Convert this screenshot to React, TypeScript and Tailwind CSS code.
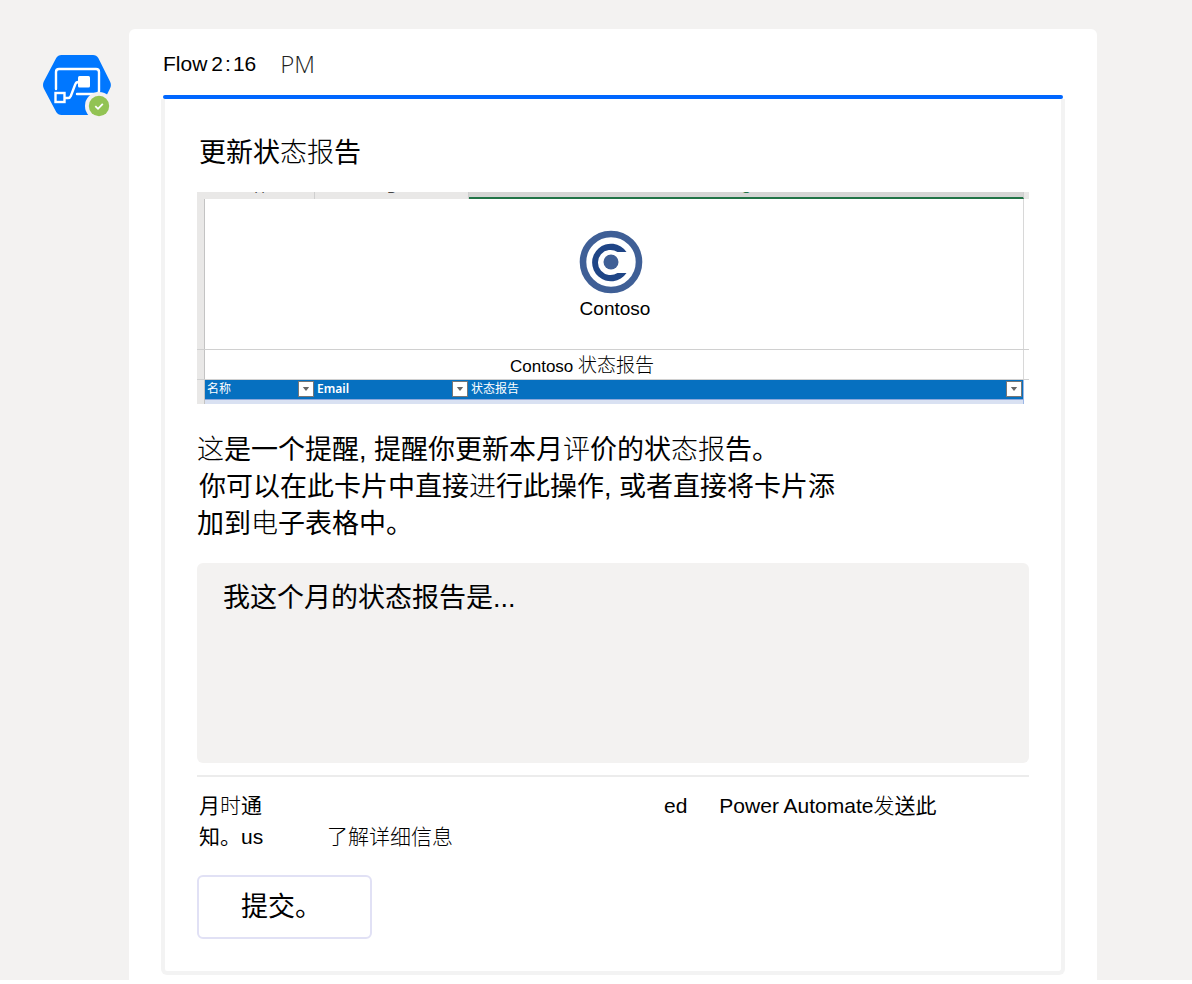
import type { ReactNode } from "react";

const columns = [
  { letter: "A", title: "名称", width: "w-[110px]" },
  { letter: "B", title: "Email", width: "w-[154px]" },
  { letter: "C", title: "状态报告", width: "" },
];

function Thin({ children }: { children: ReactNode }) {
  return <span className="font-light">{children}</span>;
}

function FlowAvatar() {
  return (
    <svg viewBox="0 0 68 62" className="h-[62px] w-[68px] shrink-0" aria-hidden="true">
      <path
        d="M18.5 0H50q3.500 0 5.300 3L67 26.500q1.800 3.500 0 7L55.300 57q-1.800 3-5.300 3H18.500q-3.500 0-5.300-3L.8 33.500q-1.600-3.500 0-7L13.200 3Q15 0 18.500 0Z"
        fill="#0077ff"
      />
      <g fill="none" stroke="#fff" strokeWidth="2.400">
        <path d="M13 34V17q0-3 3-3h37q3 0 3 3v19q0 3-3 3H34" strokeLinecap="round" />
        <path d="M22 43h3q2 0 2.800-2l4.400-11.500q.8-2.500 3.200-2.500H37" />
        <rect x="12.500" y="38" width="9" height="9" />
      </g>
      <rect x="35" y="21" width="12" height="11.500" rx="1.500" fill="#fff" />
      <circle cx="56" cy="51" r="14" fill="#f3f2f1" />
      <circle cx="56" cy="51" r="10.200" fill="#92c353" />
      <path d="M52.300 51.200l2.700 2.600 4.800-5" fill="none" stroke="#fff" strokeWidth="1.800" />
    </svg>
  );
}

function ContosoLogo() {
  return (
    <svg viewBox="0 0 64 64" className="h-16 w-16" aria-hidden="true">
      <circle cx="32" cy="32" r="28" fill="none" stroke="#3f5f96" strokeWidth="6.600" />
      <path
        d="M47.500 22A18.800 18.800 0 1 0 47.500 43H38.500A12.600 12.600 0 1 1 38.500 22Z"
        fill="#1f4586"
      />
      <circle cx="32" cy="32" r="7.500" fill="#3f5f96" />
    </svg>
  );
}

function SheetRow({ className, children }: { className: string; children?: ReactNode }) {
  return (
    <div className="flex border-b border-[#d0d0d0]">
      <div className="w-2 shrink-0 border-r border-[#c3c3c3] bg-[#e9e8e7]" />
      <div className={`flex flex-1 flex-col items-center border-r border-[#d8d8d8] text-black ${className}`}>
        {children}
      </div>
      <div className="w-[5px] shrink-0" />
    </div>
  );
}

function Sheet() {
  return (
    <div>
      {/* Column letters, scrolled almost out of view */}
      <div className="flex h-[7px] overflow-hidden bg-[#e9e8e7] pl-2 text-[13px] leading-[14px] text-[#444]">
        {columns.map((column) => (
          <div
            key={column.letter}
            className={`flex justify-center border-r border-[#cfcfcf] ${
              column.letter === "C"
                ? "mr-[5px] flex-1 border-b-2 border-b-[#217346] bg-[#d5d5d4] text-[#217346]"
                : column.width
            }`}
          >
            <span className="-mt-[10px]" aria-hidden="true">{column.letter}</span>
          </div>
        ))}
      </div>

      <SheetRow className="h-[150px] pt-[31px] pr-[6px]">
        <ContosoLogo />
        <p className="pt-px pl-2 text-[19px] leading-7">Contoso</p>
      </SheetRow>
      <SheetRow className="h-[29px] justify-end">
        <p className="pr-16 text-[17px] leading-6">
          Contoso <span className="text-[19px] font-light">状态报告</span>
        </p>
      </SheetRow>

      {/* Table header */}
      <div className="flex">
        <div className="w-2 shrink-0 border-r border-[#c3c3c3] bg-[#e9e8e7]" />
        <table className="flex-1 table-fixed border-collapse">
          <thead>
            <tr className="bg-[#0670c0] text-xs text-white">
              {columns.map((column) => (
                <th key={column.title} scope="col" className={`h-[19px] p-0 font-normal ${column.width}`}>
                  <span className="flex items-center justify-between pr-px pl-[2px]">
                    <span className={column.title === "Email" ? "font-['Noto_Sans'] text-xs leading-4 font-semibold" : "leading-4"}>
                      {column.title}
                    </span>
                    <button
                      type="button"
                      aria-label={`筛选 ${column.title}`}
                      className="flex h-4 w-4 items-center justify-center border border-[#777] bg-white"
                    >
                      <svg viewBox="0 0 8 5" className="h-1 w-2">
                        <path d="M0 0h8L4 5Z" fill="#666" />
                      </svg>
                    </button>
                  </span>
                </th>
              ))}
            </tr>
          </thead>
          <tbody>
            <tr className="border-t border-[#8ea9db] bg-[#d9e1f2]">
              <td colSpan={3} className="h-[5px] p-0" />
            </tr>
          </tbody>
        </table>
        <div className="w-[6px] shrink-0 border-l border-[#9db8e6]" />
      </div>
    </div>
  );
}

export default function App() {
  return (
    <div className="bg-white pb-1 font-['Liberation_Sans','Noto_Sans_CJK_SC',sans-serif] text-black" lang="zh-CN">
      <main className="flex bg-[#f3f2f1] pt-[29px] pr-[95px] pl-[43px]">
        <div className="pt-[26px] pr-[18px]">
          <FlowAvatar />
        </div>

        <article className="flex-1 rounded-t-md bg-white px-8 pb-[5px]">
          <header className="flex h-[66px] items-center pt-1 pl-[2px] text-[21px]">
            <span>Flow</span>
            <time className="flex gap-[2px] pl-1">
              <span>2</span>
              <span>:</span>
              <span>16</span>
            </time>
            <span className="pl-6 font-['Open_Sans'] text-2xl font-light text-[#222]">PM</span>
          </header>

          {/* Card */}
          <section>
            <div className="mx-[2px] h-1 rounded-full bg-[#0067ff]" />
            <div className="rounded-b-md border-4 border-t-0 border-[#f3f3f3] px-8 pb-8">
              <h1 className="pt-[34px] pl-[2px] text-[27px] leading-[40px] font-normal">
                更新状<Thin>态报</Thin>告
              </h1>

              <div className="pt-[19px]">
                <Sheet />
              </div>

              <p className="pt-7 text-[27px] leading-[37px]">
                <Thin>这</Thin>是一个提醒, 提醒你更新本月<Thin>评</Thin>价的状<Thin>态报</Thin>告。
                <br />
                <span className="pl-[2px]">
                  你可以在此卡片中直接<Thin>进</Thin>行此操作, 或者直接将卡片添
                </span>
                <br />
                加到<Thin>电</Thin>子表格中。
              </p>

              <textarea
                aria-label="状态报告"
                defaultValue="我这个月的状态报告是..."
                className="mt-5 block h-[200px] w-full resize-none rounded-md bg-[#f3f2f1] px-[26px] py-[17px] text-[27px] leading-[37px] outline-none"
              />

              <hr className="mt-3 border-t-2 border-[#ececec]" />

              <div className="flex pt-[13px] text-[21px] leading-[31px]">
                <div className="w-[130px] pl-[2px]">
                  月<Thin>时</Thin>通
                  <br />
                  知。us
                </div>
                <a href="#" className="self-end font-light">了解详细信息</a>
                <span className="pl-[211px]">ed</span>
                <span className="pl-8">
                  Power Automate<Thin>发</Thin>送此
                </span>
              </div>

              <button
                type="button"
                className="mt-[23px] block h-16 w-[175px] rounded-md border-2 border-[#e1e1f5] pl-[42px] text-left text-[27px]"
              >
                提交。
              </button>
            </div>
          </section>
        </article>
      </main>
    </div>
  );
}
